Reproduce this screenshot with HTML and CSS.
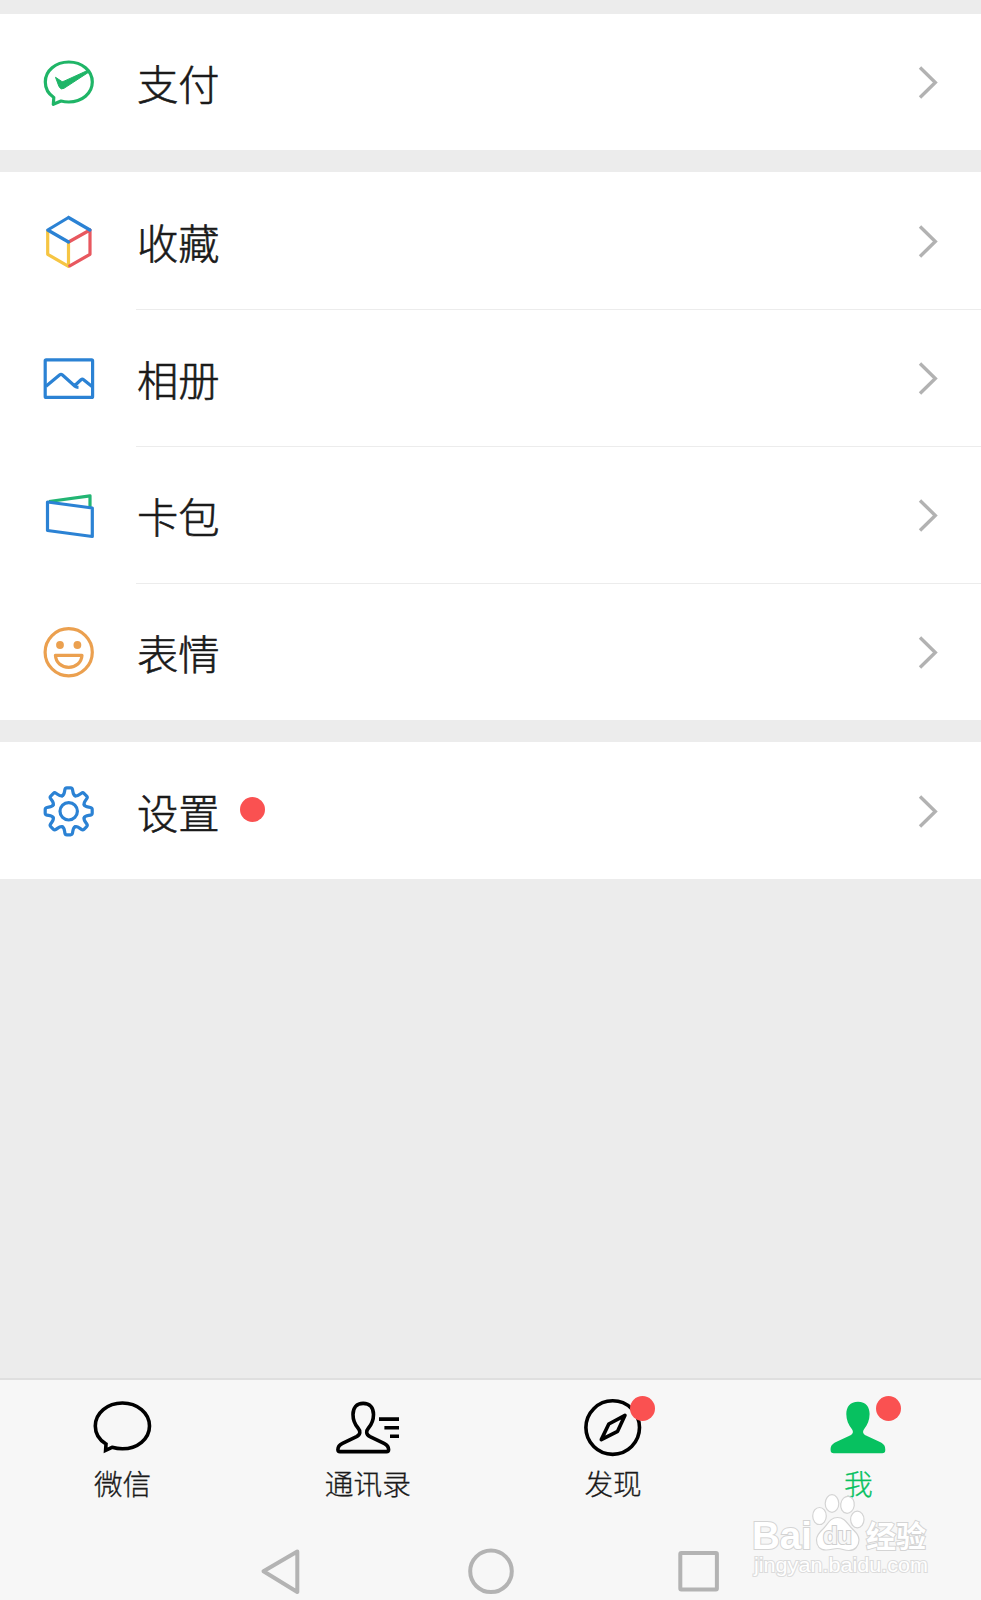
FILE: index.html
```html
<!DOCTYPE html>
<html lang="zh-CN">
<head>
    <meta charset="UTF-8">
    <meta name="viewport" content="width=device-width, initial-scale=1.0">
    <title>我</title>
    <link rel="stylesheet" href="styles.css">
</head>
<body>
    <svg class="defs" width="0" height="0">
        <symbol id="arrow" viewBox="0 0 20 34">
            <path d="M2 2.5 L17.3 17.5 L2 32.5" fill="none" stroke="#b2b2b2" stroke-width="3.4"/>
        </symbol>
    </svg>

    <div class="list">
        <div class="group">
            <div class="row">
                <svg class="icon" viewBox="0 0 60 60" fill="none" stroke="#1fb567" stroke-width="3.2" stroke-linejoin="round">
                    <path d="M14.8 45.5 C9.3 41.8 6.3 36.3 6.3 30 C6.3 18.7 16.6 10 29.8 10 C43 10 53.3 18.7 53.3 30 C53.3 41.3 43 50 29.8 50 C27 50 24.5 49.7 22 49 L14.3 52.3 Z"/>
                    <path d="M16.5 25.3 L22.5 29.3 Q23.5 29.9 25 29.2 L49.5 18 L50 20 L25 36.3 Q22 38.2 20 34.7 Z" fill="#1fb567" stroke-width="1"/>
                </svg>
                <span class="label">支付</span>
                <svg class="arrow"><use href="#arrow"/></svg>
            </div>
        </div>

        <div class="group">
            <div class="row">
                <svg class="icon" viewBox="0 0 60 60" fill="none" stroke-width="3.2" stroke-linejoin="round" stroke-linecap="round">
                    <path d="M8.7 19.5 V43.3 L29.5 55.3 V31" stroke="#f6c543"/>
                    <path d="M51 19.5 V43.3 L30.8 54.8 M30.5 30.5 L51 19" stroke="#e8585f"/>
                    <path d="M29.5 6.5 L51 19 M29.5 6.5 L8.7 19 L29.5 31" stroke="#2b82d4"/>
                </svg>
                <span class="label">收藏</span>
                <svg class="arrow"><use href="#arrow"/></svg>
            </div>
            <div class="row">
                <svg class="icon" viewBox="0 0 60 60" fill="none" stroke="#2b82d4" stroke-width="3.2" stroke-linejoin="round">
                    <rect x="6.2" y="11.8" width="47.4" height="37.6" rx="1"/>
                    <path d="M7 38.3 L20.5 27 Q22 25.8 23.5 27 L36 38.2 Q37.3 39.3 39.5 39.4 M35.5 37.7 L42 31.7 Q43.3 30.6 44.6 31.7 L53 38.5"/>
                </svg>
                <span class="label">相册</span>
                <svg class="arrow"><use href="#arrow"/></svg>
            </div>
            <div class="row">
                <svg class="icon" viewBox="0 0 60 60" fill="none" stroke="#2b82d4" stroke-width="3.2" stroke-linejoin="round">
                    <path d="M10 16.5 L51 10.8 V22" stroke="#22b573"/>
                    <path d="M8.5 17 L53.3 23 V51.5 L8.5 45.5 Z"/>
                </svg>
                <span class="label">卡包</span>
                <svg class="arrow"><use href="#arrow"/></svg>
            </div>
            <div class="row">
                <svg class="icon" viewBox="0 0 60 60" fill="none" stroke="#eba04f" stroke-width="3.2" stroke-linejoin="round">
                    <circle cx="29.7" cy="30.3" r="23.6"/>
                    <circle cx="21" cy="23" r="3.9" fill="#eba04f" stroke="none"/>
                    <circle cx="38.4" cy="23" r="3.9" fill="#eba04f" stroke="none"/>
                    <path d="M16.4 33.4 H43 C42.5 40.5 37 45.3 29.7 45.3 C22.4 45.3 16.9 40.5 16.4 33.4 Z"/>
                </svg>
                <span class="label">表情</span>
                <svg class="arrow"><use href="#arrow"/></svg>
            </div>
        </div>

        <div class="group">
            <div class="row">
                <svg class="icon" viewBox="0 0 60 60" fill="none" stroke="#2b82d4" stroke-width="3.2" stroke-linecap="round">
                    <defs>
                        <path id="tooth" d="M-6.4 -15.5 C-4.8 -16.2 -4.5 -17.4 -4.1 -20 L-3.8 -21.8 Q-3.5 -23.5 -1.9 -23.5 H1.9 Q3.5 -23.5 3.8 -21.8 L4.1 -20 C4.5 -17.4 4.8 -16.2 6.4 -15.5"/>
                    </defs>
                    <g transform="translate(29.7 30.3)">
                        <use href="#tooth"/>
                        <use href="#tooth" transform="rotate(45)"/>
                        <use href="#tooth" transform="rotate(90)"/>
                        <use href="#tooth" transform="rotate(135)"/>
                        <use href="#tooth" transform="rotate(180)"/>
                        <use href="#tooth" transform="rotate(225)"/>
                        <use href="#tooth" transform="rotate(270)"/>
                        <use href="#tooth" transform="rotate(315)"/>
                        <circle r="8.7"/>
                    </g>
                </svg>
                <span class="label">设置</span>
                <i class="dot"></i>
                <svg class="arrow"><use href="#arrow"/></svg>
            </div>
        </div>
    </div>

    <div class="bottom">
        <div class="tabs">
            <div class="tab">
                <svg class="tab-icon" viewBox="0 0 72 64" fill="none" stroke="#000" stroke-width="3.6">
                    <path d="M19 48 C12 43.8 8.3 37.5 8.3 30 C8.3 17 20.5 7 35.4 7 C50.3 7 62.5 17 62.5 30 C62.5 43 50.3 52.8 35.4 52.8 C31.5 52.8 28.5 52.3 25 51.3 L18.6 54.3 Z"/>
                </svg>
                <span>微信</span>
            </div>
            <div class="tab">
                <svg class="tab-icon" viewBox="0 0 72 64" fill="none" stroke="#000" stroke-width="3.6">
                    <path d="M31.2 7.4 C24.5 7.4 21 12 21 18.5 C21 24 23 28.5 26 32 C28.8 35.2 28.5 38.5 24.5 40.6 L10.5 47.3 C6.5 49.3 5.9 51 5.9 53.5 Q5.9 55.6 8 55.6 H54.5 Q56.6 55.6 56.6 53.5 C56.6 51 56 49.3 52 47.3 L38 40.6 C34 38.5 33.7 35.2 36.5 32 C39.5 28.5 41.5 24 41.5 18.5 C41.5 12 38 7.4 31.2 7.4 Z"/>
                    <path d="M47 23.1 H67 M52.4 31.7 H67 M58 40.3 H67"/>
                </svg>
                <span>通讯录</span>
            </div>
            <div class="tab">
                <svg class="tab-icon" viewBox="0 0 72 64" fill="none" stroke="#000" stroke-width="3.6" stroke-linejoin="round">
                    <circle cx="35.7" cy="31.6" r="26.8"/>
                    <path d="M48 19.3 L31.8 28 L24.3 43.6 L40.6 35.3 Z"/>
                </svg>
                <i class="dot"></i>
                <span>发现</span>
            </div>
            <div class="tab active">
                <svg class="tab-icon" viewBox="0 0 72 64" fill="#07c160">
                    <path d="M36 5.7 C28 5.7 24.3 11 24.3 18 C24.3 24 26.5 29 29.8 33 C31.8 35.8 31 38 28 39.5 L13.5 46.3 C9.5 48.5 8.6 50.5 8.6 54 Q8.6 57.3 11.8 57.3 H60.2 Q63.3 57.3 63.3 54 C63.3 50.5 62.5 48.5 58.5 46.3 L44 39.5 C41 38 40.2 35.8 42.2 33 C45.5 29 47.6 24 47.6 18 C47.6 11 44 5.7 36 5.7 Z"/>
                </svg>
                <i class="dot"></i>
                <span>我</span>
            </div>
        </div>

        <!-- 系统导航键 -->
        <div class="nav">
            <svg viewBox="0 0 48 48"><path d="M39.3 3.5 L5.5 23.3 L39.3 44 Z"/></svg>
            <svg viewBox="0 0 48 48"><circle cx="24" cy="23.3" r="20.8"/></svg>
            <svg viewBox="0 0 48 48"><rect x="5.3" y="5" width="36.6" height="36.6" rx="1"/></svg>
        </div>
    </div>

    <!-- 水印 -->
    <svg class="watermark" viewBox="0 0 185 95">
        <text x="2" y="58.5" font-size="39" font-weight="700" textLength="60" lengthAdjust="spacingAndGlyphs">Bai</text>
        <ellipse cx="69.5" cy="26" rx="6.8" ry="8.5"/>
        <ellipse cx="82" cy="13.5" rx="6.8" ry="8.8"/>
        <ellipse cx="97.5" cy="14.8" rx="6.8" ry="8.5" transform="rotate(8 97.5 14.8)"/>
        <ellipse cx="107.3" cy="29.5" rx="6.7" ry="8.3"/>
        <path d="M87.5 27.5 C80 27.5 78 34 73 39 C68 43.5 66.5 46 66.5 50 C66.5 56 70 60 76 60 C81 60 83 58.5 87.5 58.5 C92 58.5 94 60.5 99 60.5 C105 60.5 109 56 109 50 C109 45.5 106.5 43 102.5 39 C97.5 34 95 27.5 87.5 27.5 Z"/>
        <text class="du" x="73" y="53.5" font-size="24" font-weight="700" textLength="29">du</text>
        <text x="116" y="56.5" font-size="30" font-weight="700" textLength="60">经验</text>
        <text class="url" x="4" y="81.5" font-size="20" textLength="174" lengthAdjust="spacingAndGlyphs">jingyan.baidu.com</text>
    </svg>
</body>
</html>
```

FILE: styles.css
```css
* {
    box-sizing: border-box;
}

body {
    margin: 0;
    height: 1600px;
    display: flex;
    flex-direction: column;
    justify-content: space-between;
    position: relative;
    overflow: hidden;
    background: #ececec;
    color: #1a1a1a;
    font-family: "Noto Sans CJK SC", sans-serif;
}

svg {
    display: block;
}

.defs {
    position: absolute;
}

/* 菜单列表 */
.list {
    padding-top: 13.9px;
    display: flex;
    flex-direction: column;
    gap: 22.2px;
}

.group {
    background: #fff;
}

.row {
    height: 136.3px;
    padding: 0 43px 0 39px;
    display: flex;
    align-items: center;
}

.row + .row {
    height: 137.2px;
    border-top: 1.5px solid #ececec;
    border-image: linear-gradient(to right, transparent 137px, #ececec 137px) 1;
}

.icon {
    width: 60px;
    height: 60px;
    margin-right: 38px;
}

.label {
    font-size: 41.3px;
    line-height: 60px;
    font-weight: 300;
    -webkit-text-stroke: 0.6px currentColor;
}

.arrow {
    width: 20px;
    height: 34px;
    margin-left: auto;
}

.dot {
    width: 25px;
    height: 25px;
    border-radius: 50%;
    background: #fa5151;
}

.row .dot {
    margin: 0 0 2px 20.5px;
}

/* 底部标签栏 */
.bottom {
    height: 222px;
    background: #f7f7f7;
    border-top: 2px solid #dfdfdf;
}

.tabs {
    display: flex;
}

.tab {
    flex: 1;
    height: 141px;
    padding-top: 16px;
    display: flex;
    flex-direction: column;
    align-items: center;
    position: relative;
    font-size: 28.7px;
    line-height: 42px;
    font-weight: 300;
    -webkit-text-stroke: 0.3px currentColor;
}

.tab-icon {
    width: 72px;
    height: 64px;
    margin-bottom: 2px;
}

.tab .dot {
    position: absolute;
    top: 16px;
    left: calc(50% + 17.3px);
}

.active {
    color: #07c160;
}

.nav {
    display: flex;
    justify-content: center;
    gap: 160.5px;
    padding-top: 27px;
}

.nav svg {
    width: 48px;
    height: 48px;
    fill: none;
    stroke: #b3b3b3;
    stroke-width: 4;
    stroke-linejoin: round;
}

.watermark {
    position: absolute;
    left: 750px;
    top: 1490px;
    width: 185px;
    height: 95px;
    font-family: "Liberation Sans", "Noto Sans CJK SC", sans-serif;
    fill: #fff;
    stroke: #d4d4d4;
    stroke-width: 1.2;
}

.watermark text {
    paint-order: stroke;
    stroke-width: 2;
}

.watermark .du {
    fill: #f7f7f7;
    stroke: #cfcfcf;
}

.watermark .url {
    stroke: #dcdcdc;
}
```
